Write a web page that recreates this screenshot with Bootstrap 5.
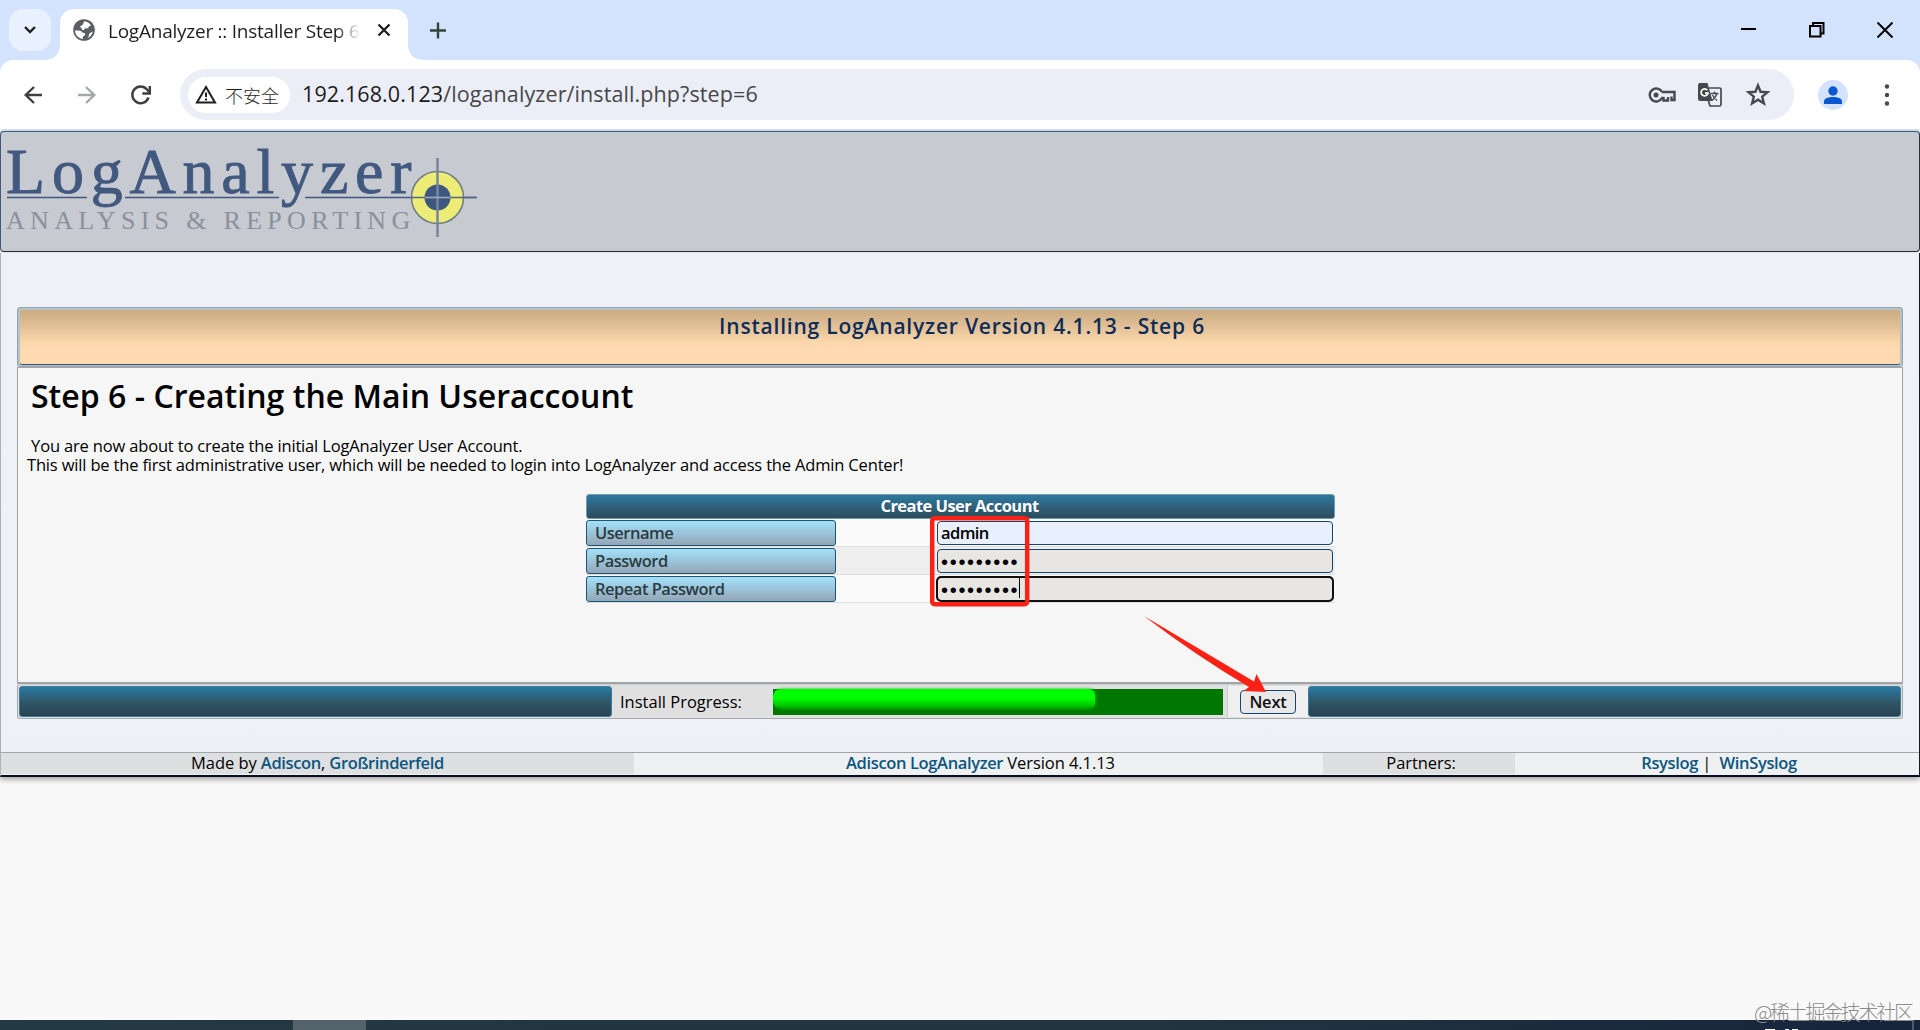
<!DOCTYPE html>
<html lang="zh-CN">
<head>
<meta charset="utf-8">
<title>LogAnalyzer :: Installer Step 6</title>
<link href="https://cdn.jsdelivr.net/npm/bootstrap@5.3.0/dist/css/bootstrap.min.css" rel="stylesheet">
<style>
body{width:1920px;height:1030px;overflow:hidden;background:#f9f9f9;color:#000;font:500 16.5px/20px "Open Sans","Noto Sans CJK SC",sans-serif}
svg{display:block;flex:none}
a{color:#0b5680;text-decoration:none;font-weight:600;letter-spacing:-.36px}
/* browser chrome */
.strip{height:60px;background:#d3e3fd;padding:9px 27px 0 9px}
.chev{width:42px;height:42px;border-radius:14px;background:#e9f1fe}
.tab{width:348px;height:51px;margin-left:9px;background:#fff;border-radius:14px 14px 0 0;padding:0 17px 9px 13px}
.tab::before,.tab::after{content:"";position:absolute;bottom:0;width:14px;height:14px}
.tab::before{left:-14px;background:radial-gradient(circle at 0 0,transparent 13.5px,#fff 14px)}
.tab::after{right:-14px;background:radial-gradient(circle at 100% 0,transparent 13.5px,#fff 14px)}
.tabname{font:400 19px/26px "Open Sans",sans-serif;letter-spacing:-.24px;color:#1f1f1f;width:252px;margin-left:13px;padding-top:2px;-webkit-mask-image:linear-gradient(90deg,#000 228px,transparent 252px);mask-image:linear-gradient(90deg,#000 228px,transparent 252px)}
.winbtns{gap:52px;height:42px}
.toolwrap{background:#d3e3fd}
.tools{height:69px;background:#fff;border-radius:13px 13px 0 0;padding:0 24px 0 21px}
.pill{width:1614px;height:51px;border-radius:26px;background:#ebeef7;padding:0 23px 0 8px;margin-left:27px}
.chip{width:102px;height:36px;border-radius:18px;background:#fff;padding-left:7px;font:300 18px/36px "Noto Sans CJK SC",sans-serif;color:#1f1f1f}
.url{font:400 21.5px/30px "Open Sans",sans-serif;letter-spacing:.1px;color:#474747;margin-left:12px;padding-bottom:2px}
.url span{color:#1b1b1b}
.avatar{width:30px;height:30px;border-radius:50%;background:#d3e3fd;margin-left:24px}
/* page */
.banner{height:121px;margin-top:2px;border:1px solid #28323e;border-top-color:#3f587c;border-left-color:#3f587c;border-radius:4px;background:#c7cad1;box-shadow:0 -2px #cfdcea}
.logo-main{font:64px "Liberation Serif",serif;letter-spacing:6.8px;fill:#42597f;stroke:#42597f;stroke-width:.9px}
.logo-sub{font:26px "Liberation Serif",serif;letter-spacing:5.3px;fill:#8a909c}
.site{height:524px;margin-top:1px;background:linear-gradient(#eef2f6,#edf1f5);border:0 solid #a9b3ba;border-left-width:1px;border-right:1px solid #111c28;border-bottom:2px solid #06101c;box-shadow:0 2px 6px #0006}
.wiz{margin:54px 16px 0 16px}
.wiztitle{height:60px;border:1px solid #99a3a9;border-radius:3px;padding:2px;background:#b5c2c8}
.wiztitle>div{height:55px;border-bottom:1px solid #35547f;border-radius:2px;background:linear-gradient(#cbab83,#e2bf96 30%,#fad6ab 58%,#ffd9b0 70%);font:600 21px/26px "Open Sans",sans-serif;letter-spacing:.8px;color:#0c2d57;padding:3px 0 0 4px}
.wizbody{height:317px;border:1px solid #a2a5a8;border-bottom-width:2px;background:#f6f6f6;padding:8px 0 0 9px}
.wizbody h1{font:600 32px/40px "Open Sans",sans-serif;letter-spacing:.03px;margin:0 0 20px 4px}
.intro{white-space:pre;letter-spacing:-.17px;line-height:19px}
.acct{width:749px;margin:20px 0 0 559px}
.accthead{height:25px;border:1px solid #6f9db0;border-radius:3px;background:linear-gradient(#2d7aa0,#2f5e78 55%,#2b4b5b);color:#fff;font-weight:700;letter-spacing:-.55px;line-height:22px;padding-right:2px}
.acctrow{height:28px;border-bottom:1px solid #dedede;background:#fafafa}
.acctrow.alt{background:#eee}
.acctrow label{width:250px;height:26px;border:1px solid #1b5578;border-radius:3px;background:linear-gradient(#a3e0f7,#9ac4d9 50%,#95a5b4);color:#2b3b40;font-weight:600;padding-left:8px;line-height:24px;letter-spacing:-.5px}
.fld{width:396px;height:24px;border:1px solid #17446d;border-radius:4px;background:#e8e6e2;margin-right:2px;padding-left:3px;line-height:22px}
.fld.auto{background:#e8f0fe;font-weight:600;letter-spacing:-.6px}
.fld.act{outline:2px solid #101010;outline-offset:-1px}
.dots{font:20px/24px "Liberation Sans",sans-serif;letter-spacing:1.7px}
.caret{width:1px;height:20px;background:#000}
.prog{height:35px;border:1px solid #a6a9ad;border-top:1px solid #ccc;border-radius:3px;background:#e0e0e0;padding:1px 1px 1px}
.steel{width:593px;border:1px solid #3e7b97;border-radius:3px;background:linear-gradient(#2a7aa4,#2f5565 55%,#284352)}
.proglabel{padding:6px 0 0 8px}
.track{width:450px;height:26px;background:#007800;margin:3px 4px 0 3px}
.fill{height:20px;background:linear-gradient(#00fb00,#0f0 45%,#0c0 80%,#009a00);border-radius:8px 6px 6px 8px;box-shadow:1px 0 3px #00b000}
.nextcell{width:81px;background:#f0f0f0;border-left:1px solid #ccc}
.nextbtn{width:56px;height:24px;border:1px solid #17446d;border-radius:4px;background:#e8e8e8;color:#111;line-height:22px;padding:0;font-weight:600;font-size:16.5px;letter-spacing:-.2px}
.foot{margin-top:33px;height:22px;border-top:1px solid #a0a5aa;background:#eff0f1}
.foot>div{line-height:20px;letter-spacing:-.07px}
.dim{background:#dedfe0}
.task{height:10px;background:linear-gradient(90deg,#233944,#22343f 60%,#16243c)}
.taskapp{width:73px;margin-left:293px;background:#53626b}
.over{left:0;top:0;pointer-events:none}
.wm{font:300 20px "Noto Sans CJK SC",sans-serif;fill:#8c8c8c}
</style>
<script src="https://cdn.jsdelivr.net/npm/bootstrap@5.3.0/dist/js/bootstrap.bundle.min.js"></script>
</head>
<body class="d-flex flex-column position-relative">
<header>
  <div class="strip d-flex align-items-start">
    <div class="chev d-flex align-items-center justify-content-center"><svg width="14" height="10" fill="none" stroke="#1f1f1f" stroke-width="2.4"><path d="M2 2l5 5 5-5"/></svg></div>
    <div class="tab position-relative d-flex align-items-center">
      <svg width="22" height="22" viewBox="0 0 22 22"><circle cx="11" cy="11" r="10.8" fill="#5a5d61"/><path d="M11.2 2.2c3 .3 5.500 1.700 7 4.500-1.500-.3-2.200.5-2.600 1.500-.5 1.200-1.600 1.100-2.700 1.100-1.700 0-1.300 1.900-2.700 1.900-1.600 0-1-2-2.200-2.500-.9-.4-1.200-1.500.1-2 1.400-.6 2-.8 2.200-2.100zM2 11.500c1.700 0 4.200-.2 5.800.6 1.400.7 1.300 1.600 2.700 1.800 1.500.2 2.200.7 1.500 2-.6 1-1.900.8-2.100 2.200l-.2 1.900C5.500 19.500 2.200 16 2 11.500zM19.800 12.500c-.6 3-2.500 5.500-5.300 6.600.5-1.100 1.500-1.600 1.500-3 0-1.100.6-1.900 1.600-2.300z" fill="#fff"/></svg>
      <div class="tabname text-nowrap overflow-hidden">LogAnalyzer :: Installer Step 6</div>
      <svg class="ms-auto" width="14" height="14" stroke="#1f1f1f" stroke-width="2.300"><path d="M1.500 1.500l11 11M12.500 1.500l-11 11"/></svg>
    </div>
    <svg width="60" height="42" stroke="#33443f" stroke-width="2.400"><path d="M22 21.500h16M30 13.500v16"/></svg>
    <div class="winbtns d-flex align-items-center ms-auto">
      <svg width="16" height="16" stroke="#000" stroke-width="2"><path d="M0 7h15"/></svg>
      <svg width="16" height="16" fill="none" stroke="#000" stroke-width="2"><path d="M1 4h10.500v10.500H1zM4 4V1h10.500v10.500h-3"/></svg>
      <svg width="16" height="16" stroke="#000" stroke-width="2"><path d="M.5.5l15 15M15.500.5l-15 15"/></svg>
    </div>
  </div>
  <div class="toolwrap">
    <div class="tools d-flex align-items-center">
      <svg width="24" height="24" fill="none" stroke="#3c4043" stroke-width="2.400"><path d="M21 12H5M13 4l-8.300 8L13 20"/></svg>
      <svg class="ms-4" width="30" height="24" fill="none" stroke="#a5a7a9" stroke-width="2.400"><path d="M9 12h16M17 4l8.300 8-8.300 8"/></svg>
      <svg width="54" height="24" viewBox="0 0 54 24" fill="none" stroke="#3c4043" stroke-width="2.500"><path d="M49.500 14.500A8.300 8.300 0 1 1 48 6.500l2 2.500"/><path d="M50.800 3v7.500h-7.500"/></svg>
      <div class="pill d-flex align-items-center">
        <div class="chip d-flex align-items-center"><svg width="22" height="20" fill="none" stroke="#1f1f1f" stroke-width="2"><path d="M11 2L2 17.500h18z"/><path d="M11 7.500V12M11 13.500v2"/></svg><span class="ms-2 text-nowrap">不安全</span></div>
        <div class="url text-nowrap"><span>192.168.0.123</span>/loganalyzer/install.php?step=6</div>
        <svg class="ms-auto" width="28" height="18" fill="none" stroke="#45484c" stroke-width="2.400"><path d="M14 6h12.500v8h-3v-3.500M20 11v3.500h-4.500V12H14a6.500 6.500 0 1 1 0-6"/><circle cx="8" cy="9" r="2.500" fill="#45484c" stroke="none"/></svg>
        <svg style="margin-left:21px" width="26" height="26"><path d="M2 1h8.500l5 18H3.500A2.500 2.500 0 0 1 1 16.500V3z" fill="#45484c"/><path d="M12 6h10.500a1.500 1.500 0 0 1 1.500 1.500v15a1.500 1.500 0 0 1-1.500 1.500H13l-1.500-5" fill="none" stroke="#45484c" stroke-width="1.700"/><path d="M10.300 8.200a3.500 3.500 0 1 0 .7 3H8" fill="none" stroke="#fff" stroke-width="1.700"/><path d="M13.500 11.500h8M17.500 9.500v2M20 11.500c-.8 3-2.500 5-5 7M15.500 13c1 2 2.500 4 4.500 5.500" fill="none" stroke="#45484c" stroke-width="1.400"/></svg>
        <svg style="margin-left:22px" width="26" height="26" fill="none" stroke="#45484c" stroke-width="2.400"><path d="M13 3.500l2.600 6.300 6.900.5-5.300 4.400 1.700 6.700-5.900-3.700-5.900 3.700 1.700-6.700-5.300-4.400 6.900-.5z"/></svg>
      </div>
      <div class="avatar d-flex justify-content-center align-items-center"><svg width="18" height="20" fill="#0b57d0"><circle cx="9" cy="6" r="4.700"/><path d="M0 19v-2.500C0 13 5 12 9 12s9 1 9 4.500V19z"/></svg></div>
      <svg class="ms-auto" width="18" height="24" fill="#45484c"><circle cx="9" cy="3.500" r="2.200"/><circle cx="9" cy="12" r="2.200"/><circle cx="9" cy="20.500" r="2.200"/></svg>
    </div>
  </div>
</header>
<div class="banner">
  <svg width="490" height="118">
    <g stroke="#42597f" stroke-width="1.600"><path d="M6 65.500h80M124 65.500h154M304 65.500h172"/></g>
    <text class="logo-main" x="5" y="60.500">LogAnalyzer</text>
    <text class="logo-sub" x="5" y="96.500">ANALYSIS &amp; REPORTING</text>
    <circle cx="436.500" cy="65.500" r="26" fill="#edec76" stroke="#6f7f86" stroke-width="1.600"/>
    <circle cx="436.500" cy="65.500" r="13" fill="#3e577f"/>
    <path d="M410 65.500h65" stroke="#51668a" stroke-width="1.600"/><path d="M436.500 26v79" stroke="#79859d" stroke-width="2.500"/><path d="M424 65.500h25" stroke="#9ba9bd" stroke-width="1.600"/>
  </svg>
</div>
<main class="site">
  <section class="wiz">
    <div class="wiztitle"><div class="text-center">Installing LogAnalyzer Version 4.1.13 - Step 6</div></div>
    <div class="wizbody">
      <h1>Step 6 - Creating the Main Useraccount</h1>
      <div class="intro"> You are now about to create the initial LogAnalyzer User Account.
This will be the first administrative user, which will be needed to login into LogAnalyzer and access the Admin Center!</div>
      <div class="acct">
        <div class="accthead text-center">Create User Account</div>
        <div class="acctrow d-flex align-items-center justify-content-between"><label>Username</label><div class="fld auto">admin</div></div>
        <div class="acctrow alt d-flex align-items-center justify-content-between"><label>Password</label><div class="fld"><span class="dots">•••••••••</span></div></div>
        <div class="acctrow d-flex align-items-center justify-content-between"><label>Repeat Password</label><div class="fld act d-flex"><span class="dots">•••••••••</span><span class="caret"></span></div></div>
      </div>
    </div>
    <div class="prog d-flex">
      <div class="steel"></div>
      <div class="proglabel flex-grow-1">Install Progress:</div>
      <div class="border-start"><div class="track"><div class="fill" style="width:71.500%"></div></div></div>
      <div class="nextcell d-flex justify-content-center pt-1"><button class="nextbtn">Next</button></div>
      <div class="steel"></div>
    </div>
  </section>
  <footer class="foot d-flex text-center">
    <div class="dim" style="width:633px">Made by <a href="#">Adiscon</a>, <a href="#">Großrinderfeld</a></div>
    <div class="ps-1" style="width:689px"><a href="#">Adiscon LogAnalyzer</a> Version 4.1.13</div>
    <div class="dim ps-1" style="width:192px">Partners:</div>
    <div class="flex-grow-1 ps-1"><a href="#">Rsyslog</a> |&nbsp; <a href="#">WinSyslog</a></div>
  </footer>
</main>
<div class="task d-flex mt-auto"><div class="taskapp"></div></div>
<svg class="over position-absolute" width="1920" height="1030">
  <rect x="932.200" y="518.200" width="95" height="86" rx="2.500" fill="none" stroke="#fb2115" stroke-width="4.500"/>
  <path d="M1144 616L1254 681.500 1256.500 674 1266 692 1243.500 691 1249 687Q1195 655 1144 616z" fill="#fb2115"/>
  <text class="wm" x="1754" y="1020" textLength="160">@稀土掘金技术社区</text>
  <path d="M1913 1020v10" stroke="#8390a2"/><path d="M1765 1029.500h10M1785 1029.500h4M1792 1029.500h6" stroke="#fff"/>
</svg>
</body>
</html>
